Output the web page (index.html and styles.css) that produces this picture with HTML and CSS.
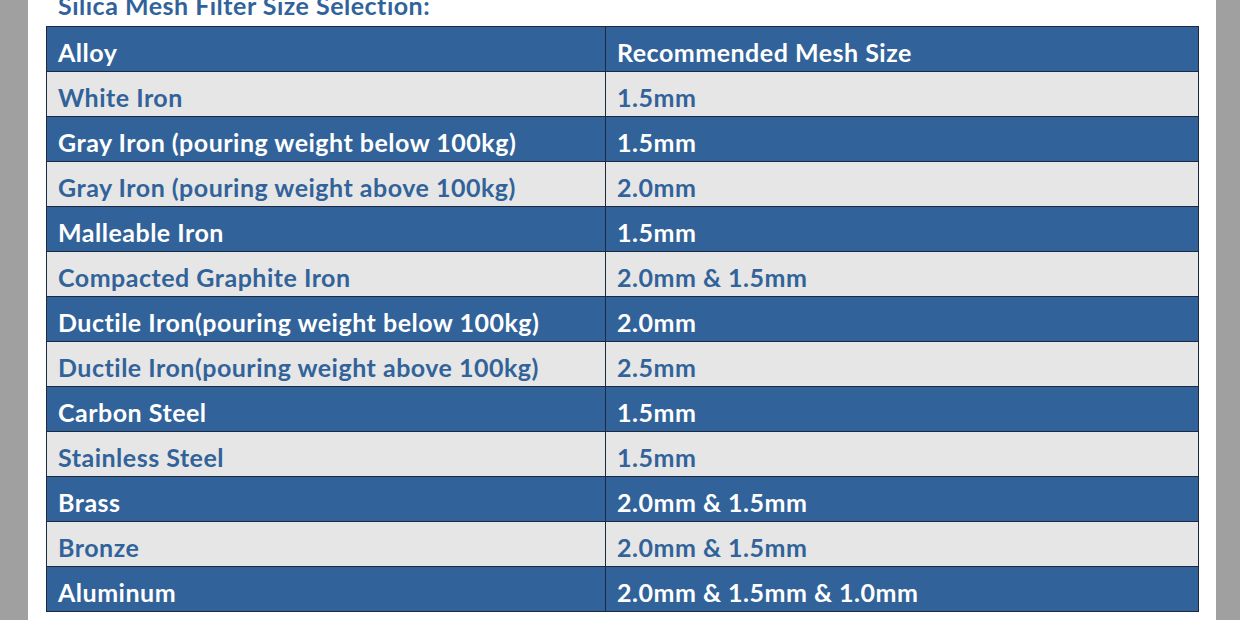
FILE: index.html
```html
<!DOCTYPE html>
<html>
<head>
<meta charset="utf-8">
<link rel="stylesheet" href="styles.css">
</head>
<body>
<div class="page">
  <h1 class="title">Silica Mesh Filter Size Selection:</h1>
  <table class="mesh">
    <tr class="head"><td class="c1">Alloy</td><td>Recommended Mesh Size</td></tr>
    <tr class="light"><td class="c1">White Iron</td><td>1.5mm</td></tr>
    <tr class="dark"><td class="c1">Gray Iron (pouring weight below 100kg)</td><td>1.5mm</td></tr>
    <tr class="light"><td class="c1">Gray Iron (pouring weight above 100kg)</td><td>2.0mm</td></tr>
    <tr class="dark"><td class="c1">Malleable Iron</td><td>1.5mm</td></tr>
    <tr class="light"><td class="c1">Compacted Graphite Iron</td><td>2.0mm &amp; 1.5mm</td></tr>
    <tr class="dark"><td class="c1">Ductile Iron(pouring weight below 100kg)</td><td>2.0mm</td></tr>
    <tr class="light"><td class="c1">Ductile Iron(pouring weight above 100kg)</td><td>2.5mm</td></tr>
    <tr class="dark"><td class="c1">Carbon Steel</td><td>1.5mm</td></tr>
    <tr class="light"><td class="c1">Stainless Steel</td><td>1.5mm</td></tr>
    <tr class="dark"><td class="c1">Brass</td><td>2.0mm &amp; 1.5mm</td></tr>
    <tr class="light"><td class="c1">Bronze</td><td>2.0mm &amp; 1.5mm</td></tr>
    <tr class="dark"><td class="c1">Aluminum</td><td>2.0mm &amp; 1.5mm &amp; 1.0mm</td></tr>
  </table>
</div>
</body>
</html>
```
FILE: styles.css
```css
html, body {
  margin: 0;
  padding: 0;
  background: #a0a0a0;
  height: 620px;
  overflow: hidden;
}
.page {
  display: flow-root;
  margin: 0 24px 0 28px;
  background: #ffffff;
  height: 620px;
  padding-left: 18px;
  font-family: Lato, "Open Sans", sans-serif;
  font-weight: 700;
  letter-spacing: 0.5px;
}
.title {
  margin: -10px 0 0 0;
  padding-left: 12px;
  height: 36px;
  font-size: 25px;
  line-height: 30px;
  font-weight: 700;
  color: #31639a;
  overflow: hidden;
}
.mesh {
  border-collapse: collapse;
  width: 1153px;
  font-size: 25px;
}
.mesh td {
  border: 1px solid #1c2940;
  height: 44px;
  padding: 10px 0 4px 11px;
  box-sizing: border-box;
  line-height: 30px;
  white-space: nowrap;
}
.mesh td.c1 {
  width: 559px;
}
.head td, .dark td {
  background: #31639a;
  color: #ffffff;
}
.light td {
  background: #e6e6e6;
  color: #31639a;
}
```
